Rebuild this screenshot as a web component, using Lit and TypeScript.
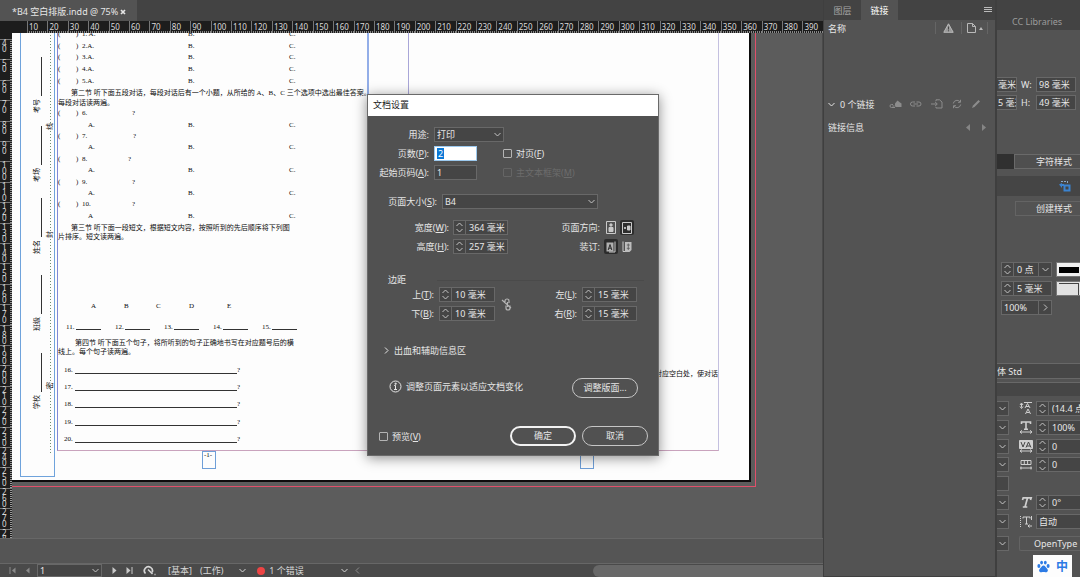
import { LitElement, html, css, svg, nothing } from "lit";
import { customElement } from "lit/decorators.js";
import { styleMap } from "lit/directives/style-map.js";

const base = css`
  * { box-sizing: border-box; }
  svg { display: block; flex: none; fill: none; stroke: currentColor; }
  button, input, select {
    font: inherit;
    color: inherit;
    margin: 0;
    padding: 0;
    border: 0;
    border-radius: 0;
    background: none;
    appearance: none;
    outline: none;
    min-width: 0;
  }
  .iconbtn { display: flex; align-items: center; justify-content: center; flex: none; }
  .field {
    height: 15px;
    background: #454545;
    border: 1px solid #686868;
    padding: 0 2px;
    line-height: 13px;
    color: #e8e8e8;
  }
  .stepper { display: flex; height: 15px; background: #454545; border: 1px solid #686868; }
  .arrows { display: flex; flex-direction: column; width: 12px; flex: none; border-right: 1px solid #686868; color: #c4c4c4; }
  .arrows button { display: flex; flex: 1; align-items: center; justify-content: center; }
  .stepper input { flex: 1; width: 10px; padding: 0 0 0 3px; color: #e8e8e8; line-height: 13px; }
  .pick { position: relative; display: flex; }
  .pick select { width: 100%; }
  .pick svg { position: absolute; right: 3px; top: 5px; color: #c4c4c4; pointer-events: none; }
`;

const chevron = (d: string, w = 7, h = 5) =>
  html`<svg width=${w} height=${h} viewBox="0 0 ${w} ${h}" aria-hidden="true"><path d=${d} /></svg>`;
const down = () => chevron("M.5 1 3.5 4 6.5 1");
const up = () => chevron("M.5 4 3.5 1 6.5 4");
const right = () => chevron("M1 .5 4 3.5 1 6.5", 5, 7);
const left = () => chevron("M4 .5 1 3.5 4 6.5", 5, 7);

const stepper = (id: string, label: string, value: string, tail: unknown = nothing) => html`
  <div class="stepper">
    <span class="arrows">
      <button aria-label="${label} +">${up()}</button>
      <button aria-label="${label} -">${down()}</button>
    </span>
    <input id=${id} aria-label=${label} .value=${value} />
    ${tail}
  </div>`;

const BLANKS = [["6.", 50], ["7.", 51], ["8.", 46], ["9.", 50], ["10.", 50]] as const;

@customElement("document-page")
class DocumentPage extends LitElement {
  static styles = [base, css`
    :host {
      display: block;
      flex: none;
      color: #0c0c0c;
      font: 7px/9px "Liberation Serif", "Noto Sans CJK SC", serif;
      white-space: nowrap;
    }
    .bleed { width: 744px; padding: 0 4px 4px 0; border-right: 1px solid #e0506a; border-bottom: 1px solid #e0506a; }
    .page {
      position: relative;
      display: grid;
      grid-template-columns: 35px 312px 348px;
      column-gap: 2px;
      height: 453px;
      padding-left: 8px;
      background: #fdfdfd;
      border: solid #0c0c0c;
      border-width: 0 2px 2px 0;
    }
    .binding {
      display: grid;
      grid-template-columns: 24px 10px;
      height: 448px;
      border: solid #6fa3dc;
      border-width: 0 1px 1px 1px;
    }
    .names {
      display: grid;
      grid-template-rows: 69px 72px 77px 78px 60px;
      align-content: start;
      padding-top: 28px;
      justify-items: end;
    }
    .name { display: flex; flex-direction: column; align-items: end; gap: 3px; width: 12px; }
    .name .turned { margin-right: 3px; }
    .rule { height: 39px; width: 1px; background: #333; margin-right: 3px; }
    .turned { writing-mode: vertical-rl; text-orientation: sideways; transform: rotate(180deg); }
    .seal {
      display: grid;
      grid-template-rows: 101px 108px 151px;
      height: 424px;
      align-content: start;
      justify-items: center;
      align-items: end;
      background: repeating-linear-gradient(#6f8f6f 0 1px, transparent 1px 3px) 5px 0 / 1px 100% no-repeat;
    }
    .seal .turned { background: #fdfdfd; line-height: 8px; }
    .column {
      display: flex;
      flex-direction: column;
      height: 422px;
      border: solid #c9a3bd;
      border-width: 0 0 1px;
    }
    .first { border-left: 1px solid #8088d6; }
    .second { margin-left: 37px; border-right: 1px solid #c4c0e0; border-left: 1px solid #a9a6d8; }
    .edge { position: absolute; left: 355px; top: 0; width: 2px; height: 120px; background: #93aee8; }
    .block { display: grid; grid-auto-rows: 1fr; flex: none; align-items: center; }
    .choices { height: 58px; }
    .questions { height: 114px; }
    .row { display: grid; grid-template-columns: 18px 6px 106px 101px 1fr; }
    .row.answer { grid-template-columns: 30px 100px 101px 1fr; }
    .row.answer span:first-child { grid-column: 2; }
    .ask { display: flex; }
    .para { flex: none; text-indent: 13px; }
    .wide { line-height: 10px; padding-top: 1px; }
    .flush { line-height: 10px; }
    .third { padding: 2px 0 59px; }
    .fourth { text-indent: 17px; padding: 7px 0 5px; }
    .letters { display: grid; grid-template-columns: 33px 32px 33px 38px 10px; padding-left: 33px; height: 21px; line-height: 11px; }
    .blanks { display: grid; grid-template-columns: repeat(5, 49px); padding-left: 8px; line-height: 10px; }
    .blank { display: flex; gap: 1px; }
    .blank i { width: 25px; height: 8px; border-bottom: 1px solid #333; }
    .lines { height: 86px; }
    .line { display: flex; padding-left: 6px; }
    .line b { width: 11px; font-weight: 400; }
    .line i { width: 162px; height: 8px; border-bottom: 1px solid #333; }
    .tail { margin-top: 341px; text-align: right; }
    .folio {
      position: absolute;
      top: 422px;
      width: 14px;
      height: 18px;
      border: 1px solid #6f9fd8;
      padding-left: 1px;
      line-height: 7px;
    }
    .recto { left: 190px; }
    .verso { left: 568px; }
  `];

  render() {
    return html`
      <div class="bleed"><div class="page">
        <div class="binding">
          <div class="names">
            ${["考号", "考场", "姓名", "班级", "学校"].map((n) => html`
              <div class="name"><span class="rule"></span><span class="turned">${n}</span></div>`)}
          </div>
          <div class="seal">
            ${["线", "封", "密"].map((c) => html`<span class="turned">${c}</span>`)}
          </div>
        </div>
        <div class="column first">
          <div class="block choices">
            ${["1. A.", "2.A.", "3.A.", "4.A.", "5.A."].map((t) => html`
              <div class="row"><span>(</span><span>)</span><span>${t}</span><span>B.</span><span>C.</span></div>`)}
          </div>
          <div class="para wide">第二节 听下面五段对话，每段对话后有一个小题，从所给的 A、B、C 三个选项中选出最佳答案。</div>
          <div class="flush">每段对话读两遍。</div>
          <div class="block questions">
            ${BLANKS.map(([n, w]) => html`
              <div class="row"><span>(</span><span>)</span>
                <span class="ask"><span style=${styleMap({ width: `${w}px` })}>${n}</span>?</span></div>
              <div class="row answer"><span>${n === "10." ? "A" : "A."}</span><span>B.</span><span>C.</span></div>`)}
          </div>
          <div class="para third">第三节 听下面一段短文，根据短文内容，按照听到的先后顺序将下列图<br />片排序。短文读两遍。</div>
          <div class="letters">${["A", "B", "C", "D", "E"].map((c) => html`<span>${c}</span>`)}</div>
          <div class="blanks">
            ${[11, 12, 13, 14, 15].map((n) => html`<span class="blank">${n}.<i></i></span>`)}
          </div>
          <div class="para fourth">第四节 听下面五个句子，将所听到的句子正确地书写在对应题号后的横<br />线上。每个句子读两遍。</div>
          <div class="block lines">
            ${[16, 17, 18, 19, 20].map((n) => html`<div class="line"><b>${n}.</b><i></i>?</div>`)}
          </div>
        </div>
        <div class="column second"><div class="tail">填入对应空白处，使对话</div></div>
        <span class="edge"></span>
        <span class="folio recto">-1-</span>
        <span class="folio verso"></span>
      </div></div>`;
  }
}

@customElement("setup-dialog")
class SetupDialog extends LitElement {
  static styles = [base, css`
    :host {
      display: block;
      width: 292px;
      border: 1px solid #6a6a6a;
      background: #515151;
      color: #e6e6e6;
      font: 9px/13px "Noto Sans", "Noto Sans CJK SC", sans-serif;
      box-shadow: 0 2px 12px rgba(0, 0, 0, 0.45);
      white-space: nowrap;
    }
    h1 { margin: 0; padding: 0 5px; height: 21px; background: #fff; color: #1a1a1a; font: inherit; line-height: 19px; }
    .form { display: grid; grid-auto-rows: 19px; align-items: center; padding-top: 9px; }
    .form > label, .form > .label { text-align: right; }
    .form > label.check { text-align: left; }
    .general { grid-template-columns: 61px 43px 1fr; column-gap: 5px; }
    .usage { grid-column: 2 / 4; width: 70px; }
    .active { background: #fff; border-color: #9cc9ee; display: flex; align-items: center; }
    .active input { width: 7px; height: 11px; background: #0a78d6; color: #fff; line-height: 11px; padding-left: 1px; }
    .check { display: flex; align-items: center; gap: 4px; }
    .general .check { padding-left: 21px; }
    .check input { width: 9px; height: 9px; border: 1px solid #b4b4b4; border-radius: 1px; }
    .disabled { color: #6c6c6c; }
    .disabled input { border-color: #656565; }
    .size { grid-template-columns: 69px 156px; column-gap: 5px; padding-top: 10px; }
    .dims { grid-template-columns: 81px 55px 88px 40px; column-gap: 4px; padding-top: 7px; }
    .pair { display: flex; gap: 2px; }
    .pair .iconbtn { width: 14px; height: 15px; color: #c9c9c9; border-radius: 2px; }
    .pair .on { background: #2c2c2c; }
    .legend { display: flex; align-items: center; gap: 31px; margin-top: 19px; padding: 0 14px 0 20px; line-height: 10px; }
    .legend::after { content: ""; flex: 1; height: 1px; background: #4a4a4a; }
    .margins { grid-template-columns: 66px 56px 12px 60px 55px; column-gap: 5px; padding-top: 0; }
    .chain { grid-column: 3; grid-row: 1 / 3; color: #b5b5b5; }
    .more { display: flex; align-items: center; gap: 5px; margin: 18px 0 0 16px; height: 19px; }
    .adjust { display: flex; margin-top: 18px; padding: 0 20px 0 21px; }
    .adjust p { display: flex; align-items: center; gap: 4px; margin: 0 auto 0 0; height: 16px; }
    .pill { width: 66px; height: 20px; border: 1px solid #c6c6c6; border-radius: 10px; text-align: center; line-height: 18px; }
    .main { border: 2px solid #f2f2f2; line-height: 16px; }
    .foot { display: flex; align-items: center; gap: 6px; margin-top: 28px; padding: 0 10px 9px 11px; }
    .foot .check { margin-right: auto; }
  `];

  render() {
    return html`
      <h1>文档设置</h1>
      <div class="form general">
        <label for="use">用途:</label>
        <span class="pick usage"><select id="use" class="field"><option>打印</option></select>${down()}</span>
        <label for="pages">页数(<u>P</u>):</label>
        <span class="field active"><input id="pages" .value=${"2"} /></span>
        <label class="check"><input type="checkbox" /><span>对页(<u>F</u>)</span></label>
        <label for="start">起始页码(<u>A</u>):</label>
        <input id="start" class="field" .value=${"1"} />
        <label class="check disabled"><input type="checkbox" disabled /><span>主文本框架(<u>M</u>)</span></label>
      </div>
      <div class="form size">
        <label for="size">页面大小(<u>S</u>):</label>
        <span class="pick"><select id="size" class="field"><option>B4</option></select>${down()}</span>
      </div>
      <div class="form dims">
        <label for="w">宽度(<u>W</u>):</label>${stepper("w", "宽度", "364 毫米")}
        <span class="label">页面方向:</span>
        <span class="pair">
          <button class="iconbtn" aria-label="纵向"><svg width="10" height="13" viewBox="0 0 10 13"><path d="M.5.5h9v12h-9z" /><circle cx="5" cy="4" r="1.2" fill="currentColor" /><path d="M3 6.5h4v4H3z" fill="currentColor" /></svg></button>
          <button class="iconbtn on" aria-label="横向"><svg width="10" height="12" viewBox="0 0 10 12"><path d="M.5.5h9v11h-9z" /><circle cx="3" cy="6" r=".7" fill="currentColor" /><path d="M5.5 4h2.500v4H5.500z" fill="currentColor" /></svg></button>
        </span>
        <label for="h">高度(<u>H</u>):</label>${stepper("h", "高度", "257 毫米")}
        <span class="label">装订:</span>
        <span class="pair">
          <button class="iconbtn on" aria-label="从左到右"><svg width="10" height="12" viewBox="0 0 10 12"><path d="M.5 1.500h7v9h-7z" fill="#b0b0b0" stroke="none" /><path d="M9 .5v10.500H3" /><path d="M2.200 9 4 3.500 5.800 9M2.800 7.200h2.400" stroke="#2c2c2c" /></svg></button>
          <button class="iconbtn" aria-label="从右到左"><svg width="10" height="12" viewBox="0 0 10 12"><path d="M1 .5v10h2" /><path d="M3 1h6.500v8l-2 2H3z" fill="#bdbdbd" stroke="none" /><path d="M4.800 4h3M6.300 2.500v6.500M4.800 7.300h3" stroke="#555" stroke-width=".8" /></svg></button>
        </span>
      </div>
      <div class="legend">边距</div>
      <div class="form margins">
        <label for="t">上(<u>T</u>):</label>${stepper("t", "上", "10 毫米")}
        <button class="iconbtn chain" aria-label="统一设置"><svg width="11" height="14" viewBox="0 0 11 14"><path d="M4 6.500V4a2 2 0 0 1 4 0V6M5 8.500V11a2 2 0 0 0 4 0V8.500M6.500 5v5M1 3l9 8" stroke-width="1.200" /></svg></button>
        <label for="l">左(<u>L</u>):</label>${stepper("l", "左", "15 毫米")}
        <label for="b">下(<u>B</u>):</label>${stepper("b", "下", "10 毫米")}
        <label for="r">右(<u>R</u>):</label>${stepper("r", "右", "15 毫米")}
      </div>
      <button class="more">${right()}出血和辅助信息区</button>
      <div class="adjust">
        <p><svg width="13" height="13" viewBox="0 0 13 13"><circle cx="6.500" cy="6.500" r="5.500" /><path d="M5.200 5.500h1.300v4M5 9.500h3M6 3.200h1.200v1H6z" /></svg>调整页面元素以适应文档变化</p>
        <button class="pill">调整版面...</button>
      </div>
      <div class="foot">
        <label class="check"><input type="checkbox" /><span>预览(<u>V</u>)</span></label>
        <button class="pill main">确定</button>
        <button class="pill">取消</button>
      </div>`;
  }
}

@customElement("links-panel")
class LinksPanel extends LitElement {
  static styles = [base, css`
    :host {
      display: flex;
      flex-direction: column;
      background: #535353;
      border: solid #3f3f3f;
      border-width: 0 2px 1px 1px;
      color: #e6e6e6;
      font: 9px/13px "Noto Sans", "Noto Sans CJK SC", sans-serif;
      white-space: nowrap;
    }
    .tabs { display: flex; align-items: center; height: 20px; background: #434343; padding: 0 3px 0 0; }
    .tab { height: 20px; width: 37px; color: #a5a5a5; }
    .tab.on { background: #535353; color: #fff; }
    .tabs .iconbtn { margin-left: auto; color: #bbb; }
    .head, .count, .info { display: flex; align-items: center; padding-left: 4px; height: 16px; }
    .head span:first-child { margin-right: auto; }
    .cell { display: flex; align-items: center; justify-content: center; gap: 3px; width: 26px; height: 12px; border-left: 1px solid #656565; color: #b9b9b9; }
    .cell:last-child { width: 8px; }
    .count { margin-top: 60px; gap: 5px; }
    .tools { display: flex; justify-content: space-between; width: 92px; margin-left: 9px; color: #8c8c8c; }
    .info { margin-top: 7px; }
    .nav { display: flex; gap: 12px; margin: 0 8px 0 auto; color: #858585; }
    .nav svg { fill: currentColor; stroke: none; }
  `];

  render() {
    return html`
      <div class="tabs">
        <button class="tab">图层</button><button class="tab on">链接</button>
        <button class="iconbtn" aria-label="菜单"><svg width="8" height="7" viewBox="0 0 8 7"><path d="M0 .5h8M0 2.500h8M0 4.500h8" /></svg></button>
      </div>
      <div class="head">
        <span>名称</span>
        <span class="cell"><svg width="11" height="10" viewBox="0 0 11 10"><path d="M5.500.8 10.200 9.300H.8z" fill="#999" /><path d="M5.500 3.500v3M5.500 7.300v1" stroke="#444" /></svg></span>
        <span class="cell"><svg width="9" height="10" viewBox="0 0 9 10"><path d="M.5.500h5l3 3v6h-8zM5.500.500v3h3" /></svg><svg width="4" height="3" viewBox="0 0 4 3"><path d="M0 3 2 0 4 3z" fill="currentColor" stroke="none" /></svg></span>
        <span class="cell"></span>
      </div>
      <div class="count">
        ${down()}<span>0 个链接</span>
        <span class="tools">
          <svg width="13" height="10" viewBox="0 0 13 10"><path d="M6 6.500V4.500l2.500-3L11 3.500l1.500 1V8H6.500z" fill="currentColor" stroke="none" /><path d="M6 8.500H2.500a1.500 1.500 0 0 1 0-3H4M3.500 7h2" /></svg>
          <svg width="12" height="10" viewBox="0 0 12 10"><path d="M5 3H2.500a2 2 0 0 0 0 4H5M6.500 3H9a2 2 0 0 1 0 4H6.500M3.500 5H8" /></svg>
          <svg width="12" height="10" viewBox="0 0 12 10"><path d="M0 5h6M4 2.800 6.300 5 4 7.200M5 2V.800h3.500L11 3v6H5V8" /></svg>
          <svg width="10" height="10" viewBox="0 0 10 10"><path d="M1.300 4.500A3.800 3.800 0 0 1 8 2.700M8.700 5.500A3.800 3.800 0 0 1 2 7.300M8.500.8v2.500H6M1.500 9.200V6.700H4" /></svg>
          <svg width="10" height="10" viewBox="0 0 10 10"><path d="M1 9 2 6.500 7.500 1 9 2.500 3.500 8z" fill="currentColor" stroke="none" /></svg>
        </span>
      </div>
      <div class="info">
        <span>链接信息</span>
        <span class="nav">
          <svg width="5" height="7" viewBox="0 0 5 7"><path d="M5 0v7L1 3.500z" /></svg>
          <svg width="5" height="7" viewBox="0 0 5 7"><path d="M0 0v7l4-3.500z" /></svg>
        </span>
      </div>`;
  }
}

const ICONS = {
  leading: svg`<path d="M2.500 1.500v4M1 3 2.500 1 4 3M1 4.500l1.500 2 1.500-2M5 .5h8" /><path d="M6 6 8.500 1.500 11 6M7 4.500h3M6.500 12 9 7l2.500 5M7.500 10.500h3" />`,
  scale: svg`<path d="M2.500 3V1h9v2M7 1v7M5 8.300h4" stroke-width="1.600" /><path d="M1 11h12M3 9.300 1 11l2 1.500M11 9.300 13 11l-2 1.500" />`,
  track: svg`<path d="M.5.500h13v8H.5z" fill="currentColor" /><path d="M2 2 4 7 6 2M7 7.500 9.500 2 12 7.500M8 6h3" stroke="#444" /><path d="M1 11h12M3 9.500 1 11l2 1.500M11 9.500 13 11l-2 1.500" />`,
  grid: svg`<path d="M2 2.500h10v4H2zM5.300 2.500v4M8.600 2.500v4M1 10h12M2 8.500v3M12 8.500v3" />`,
  skew: svg`<path d="M3.500 4 4.200 1.800h8L11.500 4M8.500 2 6 11M3.800 11h4.500" stroke-width="1.700" />`,
  turn: svg`<path d="M1.500 1v11" stroke-dasharray="1 1" /><path d="M4 3.500V2h7v1.500M7.500 2v7M6 9h3M12.500 1v4M13 11H9M10.500 9.500 9 11l1.500 1.500" />`,
};

@customElement("control-strip")
class ControlStrip extends LitElement {
  static styles = [base, css`
    :host {
      display: flex;
      flex-direction: column;
      overflow: hidden;
      background: #535353;
      color: #e6e6e6;
      font: 9px/13px "Noto Sans", "Noto Sans CJK SC", sans-serif;
      white-space: nowrap;
    }
    .lib { flex: none; height: 30px; padding: 12px 0 0 15px; width: 100%; text-align: left; background: #434343; color: #9c9c9c; }
    .dims { display: grid; grid-template-columns: 20px 11px 40px; align-items: center; gap: 3px 4px; padding-top: 47px; }
    .cut { padding: 0 0 0 1px; border-left: 0; }
    .bar { display: flex; margin-top: 44px; height: 15px; background: #303030; }
    .bar button { margin-left: 17px; flex: 1; text-align: right; padding-right: 8px; background: #4f4f4f; border: solid #6a6a6a; border-width: 1px 0 1px 1px; line-height: 13px; }
    .shelf { display: flex; justify-content: flex-end; align-items: center; margin-top: 7px; height: 20px; background: #454545; padding-right: 9px; }
    .make { margin: 5px 0 0 18px; height: 15px; text-align: right; padding-right: 8px; border: 1px solid #646464; border-right: 0; line-height: 13px; flex: none; }
    .stroke { display: grid; grid-template-columns: 51px 1fr; gap: 4px; padding: 46px 0 0 4px; }
    .drop { width: 13px; border-left: 1px solid #686868; color: #c4c4c4; }
    .swatch { height: 15px; background: #f0f0f0; border: 1px solid #777; border-right: 0; padding: 4px 1px 4px 2px; }
    .swatch i { display: block; height: 6px; background: #000; }
    .corner { padding-top: 1px; background: #e2e2e2; }
    .corner i { background: none; height: 12px; border: solid #444; border-width: 1px 1px 0 0; }
    .plain input { padding-left: 2px; }
    .font { height: 16px; margin-top: 48px; flex: none; background: #474747; border: solid #686868; border-width: 1px 0; padding: 0; line-height: 14px; }
    .tray { flex: none; height: 14px; margin: 3px 0; border-top: 1px solid #686868; background: #464646; }
    .rows { display: grid; grid-template-columns: 12px 14px 1fr; grid-template-rows: repeat(7, 1fr); height: 132px; align-items: center; flex: none; }
    .rows > .drop, .open .drop { height: 15px; border: 1px solid #686868; border-left: 0; background: #464646; width: 12px; }
    .rows .glyph { margin-left: 10px; color: #cfcfcf; }
    .rows .stepper, .rows .field { margin-left: 13px; border-right: 0; min-width: 0; }
    .open { display: flex; gap: 10px; padding-top: 5px; }
    .open .type { flex: 1; height: 15px; border: 1px solid #646464; border-right: 0; border-radius: 2px 0 0 2px; padding-left: 14px; text-align: left; line-height: 13px; overflow: hidden; }
    .ime { display: flex; align-items: center; gap: 6px; margin: 4px 0 0 36px; width: 39px; height: 22px; padding-left: 4px; background: #fdfdfd; color: #2c7be5; font-size: 12px; font-weight: 700; }
  `];

  row(icon: unknown, label: string, value: string) {
    return html`
      <button class="iconbtn drop" aria-label="选项">${down()}</button>
      <svg class="glyph" width="14" height="13" viewBox="0 0 14 13" aria-hidden="true">${icon}</svg>
      ${label === "旋转"
        ? html`<input class="field" aria-label=${label} .value=${value} />`
        : stepper("s" + label, label, value)}`;
  }

  render() {
    return html`
      <button class="lib">CC Libraries</button>
      <div class="dims">
        <input class="field cut" aria-label="X" .value=${"毫米"} /><label for="cw">W:</label><input id="cw" class="field" .value=${"98 毫米"} />
        <input class="field cut" aria-label="Y" .value=${"5 毫米"} /><label for="ch">H:</label><input id="ch" class="field" .value=${"49 毫米"} />
      </div>
      <div class="bar"><button>字符样式</button></div>
      <div class="shelf"><svg width="12" height="12" viewBox="0 0 12 12" color="#3b83d0"><path d="M5.500 5.500h5v5h-5z" stroke-width="2" /><path d="M2 1.500h6M8.500 1v3" stroke="#8aa8c8" stroke-dasharray="2 1" /><path d="M0 4.500 3 3v1h2v2H3v2z" fill="currentColor" stroke="none" /></svg></div>
      <button class="make">创建样式</button>
      <div class="stroke">
        ${stepper("sw", "描边", "0 点", html`<button class="iconbtn drop" aria-label="描边选项">${down()}</button>`)}
        <span class="swatch"><i></i></span>
        ${stepper("sc", "圆角", "5 毫米")}
        <span class="swatch corner"><i></i></span>
        <div class="stepper plain"><input aria-label="不透明度" .value=${"100%"} /><button class="iconbtn drop" aria-label="不透明度选项">${right()}</button></div>
      </div>
      <input class="field font" aria-label="字体" .value=${"体 Std"} />
      <div class="tray"></div>
      <div class="rows">
        ${this.row(ICONS.leading, "行距", "(14.4 点)")}
        ${this.row(ICONS.scale, "水平缩放", "100%")}
        ${this.row(ICONS.track, "字距", "0")}
        ${this.row(ICONS.grid, "网格", "0")}
        <span class="drop"></span><span></span><span></span>
        ${this.row(ICONS.skew, "倾斜", "0°")}
        ${this.row(ICONS.turn, "旋转", "自动")}
      </div>
      <div class="open">
        <button class="iconbtn drop" aria-label="选项">${down()}</button>
        <button class="type">OpenType</button>
      </div>
      <div class="ime">
        <svg width="13" height="13" viewBox="0 0 13 13"><g fill="#2c7be5" stroke="none"><ellipse cx="1.900" cy="6" rx="1.500" ry="1.900" /><ellipse cx="4.600" cy="2.600" rx="1.400" ry="1.900" /><ellipse cx="8.300" cy="2.600" rx="1.400" ry="1.900" /><ellipse cx="11.100" cy="6" rx="1.500" ry="1.900" /><path d="M6.500 5.500c1.500 0 2.500 2 3.700 3.200 1.500 1.800.3 3.800-1.700 3.500-1.500-.2-2.500-.2-4 0-2 .3-3.200-1.700-1.700-3.500C4 7.500 5 5.500 6.500 5.500z" /></g></svg>
        中
      </div>`;
  }
}

@customElement("app-root")
class AppRoot extends LitElement {
  static styles = [base, css`
    :host {
      display: grid;
      grid-template-columns: minmax(0, 1fr) 174px 83px;
      grid-template-rows: minmax(0, 1fr);
      height: 100vh;
      overflow: hidden;
      background: #535353;
      color: #e6e6e6;
      font: 9px/13px "Noto Sans", "Noto Sans CJK SC", sans-serif;
      white-space: nowrap;
    }
    .work {
      display: grid;
      grid-template-columns: 12px minmax(0, 1fr);
      grid-template-rows: 21px 12px minmax(0, 1fr) 26px 13px;
      min-width: 0;
      min-height: 0;
    }
    .tabs, .hruler, .strip, .status { grid-column: 1 / -1; }
    .tabs { background: #434343; display: flex; }
    .tab { display: flex; align-items: center; gap: 2px; padding: 2px 11px 0 12px; background: #535353; }
    .hruler {
      display: flex;
      padding-left: 27px;
      background: #1d1d1d;
      color: #dadada;
      font-size: 8px;
      line-height: 12px;
    }
    .hruler span {
      flex: 1 1 0;
      min-width: 0;
      padding-left: 1px;
      border-left: 1px solid #777;
      background: repeating-linear-gradient(90deg, transparent 0 1px, #888 1px 2px) 0 100% / 100% 2px no-repeat;
    }
    .vruler { overflow: hidden; background: #1d1d1d; color: #dadada; font-size: 8px; line-height: 6px; padding-top: 6px; }
    .vcells { display: grid; grid-auto-rows: 1fr; height: 510px; }
    .vcells span {
      width: 12px;
      min-height: 0;
      padding: 0 6px 0 2px;
      border-top: 1px solid #777;
      white-space: normal;
      word-break: break-all;
      background: repeating-linear-gradient(transparent 0 1px, #999 1px 2px) 100% 0 / 2px 100% no-repeat;
    }
    .canvas { background: #5c5c5c; overflow: hidden; display: flex; align-items: flex-start; border-right: 1px solid #4a4a4a; }
    .canvas document-page { margin-top: -4px; }
    .strip { background: #555; border: solid #676767; border-width: 1px 0; }
    .status { display: flex; align-items: center; background: #4a4a4a; color: #d6d6d6; overflow: hidden; }
    .first { display: flex; gap: 9px; padding: 0 7px 0 9px; color: #8a8a8a; }
    .last { display: flex; gap: 9px; padding: 0 10px; color: #c9c9c9; }
    .turn svg { fill: currentColor; }
    .pagebox { width: 65px; height: 13px; }
    .pagebox select { height: 13px; line-height: 11px; }
    .pagebox svg { top: 4px; }
    .profile { display: flex; align-items: center; gap: 8px; padding-left: 12px; }
    .profile svg { margin-left: 8px; }
    .errors { display: flex; align-items: center; gap: 4px; padding-left: 11px; width: 102px; }
    .errors svg { margin-left: auto; }
    .dot { width: 8px; height: 8px; border-radius: 4px; background: #ee4444; }
    .back { margin-left: 7px; color: #8a8a8a; }
    .scroll { margin-left: auto; width: 28%; height: 12px; border-radius: 6px 0 0 6px; background: #686868; }
    setup-dialog { position: absolute; left: 367px; top: 94px; z-index: 2; }
  `];

  render() {
    const h = Array.from({ length: 39 }, (_, i) => (i + 1) * 10);
    const v = Array.from({ length: 25 }, (_, i) => (i + 4) * 10);
    return html`
      <main class="work">
        <div class="tabs"><button class="tab">*B4 空白排版.indd @ 75%
          <svg width="6" height="6" viewBox="0 0 6 6"><path d="M1 1 5 5M5 1 1 5" stroke-width="1.700" /></svg></button></div>
        <div class="hruler">${h.map((n) => html`<span>${n}</span>`)}</div>
        <div class="vruler"><div class="vcells">${v.map((n) => html`<span>${n}</span>`)}</div></div>
        <div class="canvas"><document-page></document-page></div>
        <div class="strip"></div>
        <div class="status">
          <span class="turn first">
            <button aria-label="首页"><svg width="7" height="7" viewBox="0 0 7 7"><path d="M1 0v7" /><path d="M6.500.5v6L3 3.500z" stroke="none" /></svg></button>
            <button aria-label="上一页"><svg width="5" height="7" viewBox="0 0 5 7"><path d="M4.500.5v6L1 3.500z" stroke="none" /></svg></button>
          </span>
          <span class="pick pagebox"><select class="field" aria-label="页"><option>1</option></select>${down()}</span>
          <span class="turn last">
            <button aria-label="下一页"><svg width="5" height="7" viewBox="0 0 5 7"><path d="M.5 0v7l4-3.500z" stroke="none" /></svg></button>
            <button aria-label="末页"><svg width="7" height="7" viewBox="0 0 7 7"><path d="M6 0v7" /><path d="M.5 0v7l4-3.500z" stroke="none" /></svg></button>
          </span>
          <svg width="13" height="11" viewBox="0 0 13 11"><path d="M2.500 8.500A4 4 0 1 1 9 7.500" stroke-width="1.700" /><path d="M5 4.500 9.500 9M11.500 9.500h1" stroke-width="1.500" /></svg>
          <span class="profile"><span>[基本]</span><span>(工作)</span>${down()}</span>
          <span class="errors"><span class="dot"></span>1 个错误${down()}</span>
          <span class="back">${left()}</span>
          <span class="scroll"></span>
        </div>
      </main>
      <links-panel></links-panel>
      <control-strip></control-strip>
      <setup-dialog role="dialog" aria-label="文档设置"></setup-dialog>`;
  }
}
